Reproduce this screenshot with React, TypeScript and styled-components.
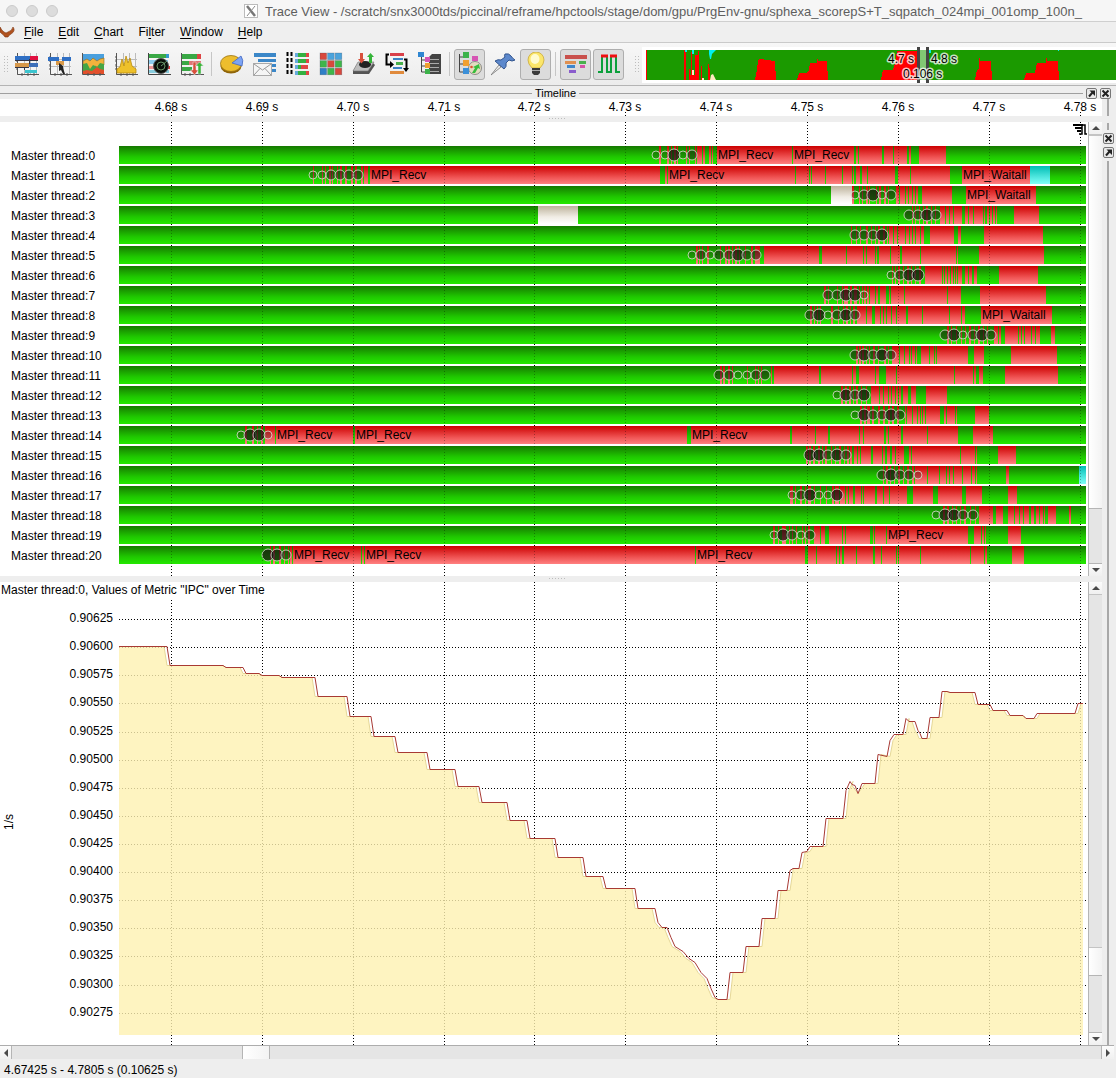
import React, { useLayoutEffect, useRef, useState } from "react";
import styled, { createGlobalStyle, css } from "styled-components";

/* ---------- shared values ---------- */

const SANS = '"Liberation Sans", Arial, Helvetica, sans-serif';
const FIRST = 119;
const LAST = 1086;
const SPAN = LAST - FIRST;

const GlobalStyle = createGlobalStyle`
  *, *::before, *::after { box-sizing: border-box; }
  body { margin: 0; background: #eeeeee; font: 12px/16px ${SANS}; color: #000; }
  button { font: inherit; color: inherit; padding: 0; margin: 0; border: 0; background: none; }
  svg { display: block; }
`;

/* ---------- trace data ---------- */

type Span = [number, number];
type Dot = [number, number];
interface Row {
  red: Span[];
  green?: Span[];
  white?: Span[];
  cyan?: Span[];
  dots: Dot[];
  labels?: [number, string][];
}

const RECV = "MPI_Recv";
const WAIT = "MPI_Waitall";

const ROWS: Row[] = [
  {
    red: [[659, 661], [667, 669], [671, 672], [674, 676], [677, 678], [686, 687], [689, 690], [695, 696], [697, 702], [703, 705], [709, 711], [712, 713], [717, 911], [919, 946]],
    green: [[792, 793], [854, 856], [858, 859], [882, 884], [893, 894], [907, 909]],
    dots: [[656, 4], [665, 4], [674, 6], [683, 4], [692, 5]],
    labels: [[718, RECV], [794, RECV]],
  },
  {
    red: [[313, 314], [322, 323], [325, 326], [329, 331], [332, 333], [337, 338], [340, 342], [345, 347], [351, 353], [355, 357], [361, 363], [364, 368], [370, 1030]],
    green: [[660, 665], [667, 668], [795, 796], [809, 810], [811, 812], [825, 826], [842, 843], [852, 853], [854, 856], [860, 862], [867, 868], [895, 898], [910, 911], [950, 962]],
    cyan: [[1030, 1050]],
    dots: [[313, 4], [322, 4], [331, 5], [340, 5], [349, 5], [358, 5]],
    labels: [[371, RECV], [669, RECV], [963, WAIT]],
  },
  {
    red: [[852, 854], [859, 860], [862, 863], [866, 868], [869, 870], [876, 877], [879, 881], [884, 886], [888, 889], [896, 899], [900, 905], [906, 908], [909, 912], [913, 915], [916, 918], [922, 952], [966, 1036]],
    white: [[831, 852]],
    dots: [[855, 4], [864, 5], [873, 6], [882, 4], [891, 5]],
    labels: [[967, WAIT]],
  },
  {
    red: [[912, 913], [915, 916], [919, 920], [923, 924], [926, 928], [931, 932], [935, 936], [940, 945], [946, 949], [950, 953], [954, 962], [965, 968], [969, 973], [974, 983], [984, 985], [987, 989], [990, 992], [993, 995], [996, 997], [1014, 1039]],
    white: [[538, 578]],
    dots: [[909, 5], [918, 5], [927, 6], [936, 5]],
  },
  {
    red: [[851, 852], [856, 857], [860, 861], [866, 868], [871, 872], [875, 876], [878, 880], [883, 885], [887, 888], [889, 893], [894, 897], [898, 905], [906, 909], [910, 912], [913, 915], [916, 920], [921, 924], [930, 954], [958, 961], [984, 1043]],
    dots: [[855, 5], [864, 5], [873, 5], [882, 6]],
  },
  {
    red: [[696, 698], [699, 700], [702, 703], [707, 709], [720, 721], [725, 727], [728, 730], [732, 733], [735, 737], [739, 740], [745, 746], [751, 753], [755, 760], [764, 958], [979, 1044]],
    green: [[819, 822], [846, 847], [863, 864], [866, 867], [875, 876], [877, 879], [890, 891], [900, 902], [920, 921], [956, 957]],
    dots: [[692, 4], [701, 5], [710, 4], [719, 5], [729, 5], [738, 6], [747, 5], [756, 5]],
  },
  {
    red: [[892, 893], [895, 896], [898, 900], [903, 904], [907, 909], [911, 912], [915, 916], [919, 921], [925, 942], [943, 944], [945, 947], [948, 950], [951, 953], [954, 955], [956, 957], [958, 962], [965, 968], [969, 972], [974, 977], [999, 1038]],
    dots: [[891, 4], [900, 5], [909, 6], [918, 6]],
  },
  {
    red: [[824, 826], [828, 829], [837, 838], [842, 843], [844, 848], [850, 852], [854, 857], [859, 860], [862, 961], [980, 1046]],
    green: [[863, 864], [866, 867], [869, 870], [875, 876], [878, 880], [886, 889], [890, 891], [904, 905], [947, 948]],
    dots: [[828, 5], [837, 5], [846, 6], [855, 6], [864, 4]],
  },
  {
    red: [[810, 812], [814, 815], [817, 818], [820, 821], [831, 833], [838, 839], [843, 844], [846, 848], [850, 851], [853, 855], [857, 965], [981, 1052]],
    green: [[866, 867], [872, 875], [880, 881], [883, 884], [886, 887], [891, 892], [896, 897], [906, 908], [922, 923], [949, 950], [961, 962]],
    dots: [[810, 5], [819, 6], [828, 4], [837, 5], [846, 6], [855, 5]],
    labels: [[982, WAIT]],
  },
  {
    red: [[947, 949], [951, 952], [956, 957], [961, 962], [965, 966], [969, 971], [974, 975], [978, 980], [983, 984], [987, 988], [994, 998], [999, 1001], [1005, 1018], [1019, 1021], [1022, 1024], [1025, 1031], [1032, 1035], [1036, 1040], [1051, 1055]],
    dots: [[945, 5], [954, 6], [963, 4], [973, 5], [982, 6], [991, 5]],
  },
  {
    red: [[856, 858], [859, 861], [862, 864], [866, 867], [869, 870], [873, 875], [878, 879], [884, 886], [888, 889], [892, 899], [900, 904], [905, 909], [910, 911], [912, 915], [916, 917], [921, 968], [974, 984], [1011, 1057]],
    green: [[929, 930], [934, 935], [936, 937]],
    dots: [[855, 5], [864, 6], [873, 5], [882, 6], [891, 5]],
  },
  {
    red: [[720, 722], [723, 725], [728, 730], [732, 733], [747, 748], [755, 756], [758, 759], [761, 762], [771, 772], [774, 973], [974, 976], [979, 983], [1005, 1058]],
    green: [[819, 821], [852, 853], [856, 859], [875, 876], [879, 886], [896, 897], [954, 955]],
    dots: [[719, 5], [729, 5], [738, 4], [747, 4], [756, 5], [765, 5]],
  },
  {
    red: [[841, 843], [845, 847], [849, 851], [853, 854], [856, 858], [861, 862], [866, 867], [871, 879], [880, 883], [884, 888], [889, 891], [892, 895], [896, 898], [899, 901], [903, 908], [911, 916], [926, 947]],
    dots: [[837, 4], [846, 6], [855, 5], [864, 6]],
  },
  {
    red: [[860, 862], [864, 866], [867, 870], [872, 874], [878, 880], [883, 885], [888, 890], [892, 894], [897, 899], [905, 906], [907, 912], [913, 917], [918, 920], [921, 922], [923, 925], [926, 940], [944, 946], [947, 955], [956, 957], [975, 989]],
    dots: [[855, 4], [864, 6], [873, 5], [882, 5], [891, 6], [900, 5]],
  },
  {
    red: [[245, 247], [252, 254], [257, 258], [261, 263], [265, 958], [973, 993]],
    green: [[275, 276], [353, 355], [687, 691], [790, 792], [815, 816], [828, 830], [859, 860], [863, 864], [884, 886], [888, 889], [901, 903], [927, 928]],
    dots: [[241, 4], [250, 6], [259, 6], [268, 4]],
    labels: [[277, RECV], [356, RECV], [692, RECV]],
  },
  {
    red: [[806, 808], [809, 811], [813, 815], [818, 820], [822, 823], [825, 827], [831, 832], [835, 836], [839, 841], [844, 845], [847, 849], [850, 977], [998, 1016]],
    green: [[852, 854], [857, 858], [860, 861], [871, 873], [882, 883], [885, 887], [890, 892], [895, 896], [904, 909], [911, 912], [960, 961], [975, 976]],
    dots: [[810, 6], [819, 6], [828, 5], [837, 6], [846, 5]],
  },
  {
    red: [[883, 884], [886, 888], [890, 891], [894, 895], [898, 900], [903, 904], [907, 909], [912, 914], [915, 977], [1006, 1009]],
    green: [[927, 928], [939, 940], [946, 947], [949, 950], [953, 954], [962, 963], [971, 972], [975, 976]],
    cyan: [[1079, 1086]],
    dots: [[882, 5], [891, 6], [900, 5], [909, 5], [918, 4]],
  },
  {
    red: [[790, 793], [795, 796], [800, 802], [805, 806], [808, 811], [814, 815], [820, 821], [826, 827], [832, 834], [835, 839], [840, 982], [1008, 1017]],
    green: [[845, 846], [848, 849], [853, 855], [861, 862], [863, 864], [875, 877], [883, 884], [889, 890], [907, 913], [933, 938], [962, 966]],
    dots: [[792, 4], [801, 5], [810, 6], [819, 4], [828, 4], [837, 6]],
  },
  {
    red: [[943, 945], [947, 949], [952, 953], [956, 957], [960, 961], [964, 966], [970, 971], [975, 976], [979, 993], [996, 1003], [1008, 1014], [1015, 1019], [1020, 1023], [1024, 1029], [1031, 1034], [1036, 1039], [1040, 1043], [1044, 1045], [1048, 1056], [1069, 1071]],
    dots: [[936, 4], [945, 6], [954, 6], [963, 5], [973, 5]],
  },
  {
    red: [[773, 775], [778, 779], [782, 786], [789, 790], [792, 793], [796, 797], [802, 803], [805, 806], [808, 810], [814, 968], [974, 981], [982, 984], [985, 986], [1008, 1021]],
    green: [[820, 821], [825, 829], [842, 843], [845, 846], [870, 873], [874, 875], [886, 887]],
    dots: [[774, 4], [783, 6], [792, 5], [801, 4], [810, 5]],
    labels: [[888, RECV]],
  },
  {
    red: [[270, 271], [273, 275], [279, 281], [284, 285], [288, 289], [290, 987], [1012, 1024]],
    green: [[292, 293], [361, 362], [364, 365], [695, 696], [805, 808], [816, 817], [836, 837], [839, 840], [842, 844], [856, 857], [873, 875], [881, 882], [896, 897], [898, 899], [920, 921], [970, 971], [984, 985]],
    dots: [[268, 6], [277, 6], [286, 5]],
    labels: [[294, RECV], [366, RECV], [697, RECV]],
  },
];

const TICKS: [number, string][] = [
  [171, "4.68 s"], [262, "4.69 s"], [353, "4.70 s"], [444, "4.71 s"], [534, "4.72 s"], [625, "4.73 s"],
  [716, "4.74 s"], [807, "4.75 s"], [898, "4.76 s"], [989, "4.77 s"], [1080, "4.78 s"],
];

const LEVELS = [37, 65, 93, 121, 150, 178, 206, 234, 262, 290, 318, 346, 374, 403, 431];
const levelName = (i: number) => (0.90625 - i * 0.00025).toFixed(5);

/* sample column, distance from the top of the metric chart */
const CURVE: [number, number][] = [
  [119, 64], [167, 64], [170, 83], [223, 83], [226, 85], [243, 85], [246, 91], [259, 91], [262, 93], [279, 93], [282, 95],
  [315, 95], [318, 114], [347, 114], [350, 134], [371, 134], [374, 154], [395, 154], [398, 170], [427, 170], [430, 187],
  [455, 187], [458, 204], [479, 204], [482, 220], [507, 220], [510, 238], [527, 238], [530, 256], [555, 256], [558, 275],
  [583, 275], [586, 294], [603, 294], [606, 306], [635, 306], [638, 326], [655, 326], [658, 340], [662, 345], [667, 345],
  [671, 355], [675, 364], [683, 369], [689, 376], [695, 380], [701, 390], [707, 396], [711, 406], [715, 415], [718, 417],
  [727, 417], [730, 390], [743, 390], [746, 364], [759, 364], [762, 336], [775, 336], [778, 308], [787, 308], [790, 288],
  [793, 286], [799, 286], [802, 270], [807, 269], [810, 264], [823, 264], [826, 236], [843, 236], [846, 208], [850, 199],
  [852, 202], [855, 203], [858, 211], [862, 201], [875, 201], [878, 172], [887, 174], [890, 158], [894, 152], [903, 152],
  [906, 136], [909, 139], [915, 139], [918, 148], [920, 151], [922, 156], [927, 156], [930, 135], [939, 135], [942, 109],
  [947, 109], [950, 110], [975, 110], [978, 122], [990, 122], [993, 128], [1007, 128], [1010, 133], [1023, 133],
  [1026, 136], [1034, 136], [1037, 131], [1075, 131], [1078, 121], [1083, 121],
];

/* lower envelope: falling edges come early, rising edges come late */
const ENVELOPE = CURVE.map(([x, y], i): [number, number] => {
  const prev = CURVE[i - 1] ?? CURVE[i];
  const next = CURVE[i + 1] ?? CURVE[i];
  const slope = next[1] - prev[1];
  if (i === 0 || i === CURVE.length - 1 || Math.abs(slope) < 5) return [x, y];
  return [slope > 0 ? x - 3 : x + 3, y];
});

/* ---------- hooks ---------- */

function useScale() {
  const ref = useRef<HTMLDivElement>(null);
  const [width, setWidth] = useState(SPAN);
  useLayoutEffect(() => {
    const node = ref.current;
    if (!node) return;
    const read = () => setWidth(node.clientWidth);
    read();
    const observer = new ResizeObserver(read);
    observer.observe(node);
    return () => observer.disconnect();
  }, []);
  const sx = (v: number) => Math.round(((v - FIRST) * width) / SPAN);
  return { ref, sx, width };
}

/* ---------- layout ---------- */

const Window = styled.div`
  display: flex;
  flex-direction: column;
  min-height: 100vh;
  overflow: hidden;
`;

const TitleBar = styled.header`
  display: flex;
  align-items: center;
  height: 22px;
  padding-left: 6px;
  background: #f6f6f6;
  border-bottom: 1px solid #cfcfcf;
  color: #5e5e5e;
  overflow: hidden;
`;

const Lights = styled.div`
  display: flex;
  flex: none;
  gap: 8px;
  margin-right: 186px;
`;

const Light = styled.button`
  width: 12px;
  height: 12px;
  border-radius: 50%;
  background: #dcdcdc;
  border: 1px solid #cbcbcb;
`;

const TitleLogo = styled.svg`
  flex: none;
`;

const TitleText = styled.h1`
  margin: 0 0 0 7px;
  padding-top: 2px;
  font: 400 13px/20px ${SANS};
  white-space: nowrap;
`;

const MenuBar = styled.nav`
  display: flex;
  align-items: center;
  height: 21px;
  background: #efefef;
  border-bottom: 1px solid #cacaca;
`;

const MenuItem = styled.button`
  margin-right: 15px;
  line-height: 18px;
  u { text-underline-offset: 2px; }
`;

const MenuLogo = styled.svg`
  margin-right: 9px;
`;

const Toolbar = styled.div`
  display: flex;
  align-items: center;
  gap: 2px;
  height: 43px;
  padding-left: 3px;
  background: linear-gradient(#f7f7f7, #ececec);
  border-bottom: 1px solid #b4b4b4;
`;

const Handle = styled.div<{ $apart?: boolean }>`
  flex: none;
  width: 6px;
  height: 18px;
  margin-left: ${(p) => (p.$apart ? 8 : 0)}px;
  background: radial-gradient(circle, #bdbdbd 1px, transparent 1px) 0 0 / 3px 3px;
`;

const ToolButton = styled.button<{ $on?: boolean }>`
  display: grid;
  place-items: center;
  flex: none;
  width: 31px;
  height: 31px;
  border-radius: 3px;
  ${(p) => p.$on && css`background: #dcdcdc; border: 1px solid #aeaeae;`}
`;

const Divider = styled.div`
  flex: none;
  width: 5px;
  height: 24px;
  background: linear-gradient(#c6c6c6, #c6c6c6) 2px 0 / 1px 100% no-repeat;
`;

const Overview = styled.div`
  flex: 1;
  min-width: 0;
  height: 36px;
  margin-top: 2px;
  padding-left: 4px;
  background: #fff;
  overflow: hidden;
`;

const DockHeader = styled.div`
  display: flex;
  align-items: center;
  gap: 3px;
  height: 13px;
  padding: 2px 5px 0 0;
  font-size: 11px;
  line-height: 11px;
`;

const Rule = styled.span<{ $lead?: boolean }>`
  flex: 1 1 ${(p) => (p.$lead ? 28 : 0)}px;
  height: 1px;
  background: #9f9f9f;
`;

const DockButton = styled.button`
  display: grid;
  place-items: center;
  width: 11px;
  height: 11px;
  border: 1px solid #777;
  border-radius: 2px;
  background: #e9e9e9;
`;

const HeaderButtons = styled.div`
  display: flex;
  gap: 3px;
`;

const Dock = styled.section`
  display: flex;
`;

const DockMain = styled.div`
  flex: 1;
  min-width: 0;
`;

const Rail = styled.aside`
  display: flex;
  flex-direction: column;
  align-items: center;
  gap: 3px;
  width: 14px;
  padding-right: 2px;
`;

const RailLine = styled.span<{ $length?: number }>`
  flex: ${(p) => (p.$length ? `0 0 ${p.$length}px` : "1")};
  width: 2px;
  background: #a8a8a8;
`;

const RailGap = styled.span`
  height: 1px;
`;

const Ruler = styled.div`
  display: flex;
  height: 17px;
  padding-right: 16px;
  background: #fff;
`;

const Panel = styled.div`
  display: flex;
  position: relative;
  background: #fff;
`;

const Labels = styled.div`
  flex: none;
  width: 119px;
`;

const ThreadLabels = styled(Labels)`
  padding: 24px 0 10px 11px;
  line-height: 20px;
`;

const Plot = styled.div`
  flex: 1;
  min-width: 0;
  margin-right: 2px;
  svg { width: 100%; overflow: visible; }
`;

const RulerPlot = styled(Plot)`
  margin-right: 0;
`;

const Splitter = styled.div`
  display: grid;
  place-items: center;
  height: 6px;
  padding-bottom: 2px;
  margin-right: -12px;
  &::after {
    content: "";
    width: 18px;
    height: 2px;
    background: radial-gradient(circle, #bdbdbd 1px, transparent 1px) 0 0 / 3px 3px;
  }
`;

const ChartTitle = styled.h2`
  position: absolute;
  top: 0;
  left: 0;
  margin: 0;
  padding: 0 1px;
  font-size: 12px;
  font-weight: 400;
  line-height: 17px;
  background: #fff;
`;

const ScrollV = styled.div`
  display: flex;
  flex-direction: column;
  flex: none;
  width: 14px;
  background: #e5e5e5;
  border-left: 1px solid #b5b5b5;
`;

const ScrollH = styled.div`
  display: flex;
  height: 14px;
  margin-right: 2px;
  background: #e5e5e5;
  border-top: 1px solid #adadad;
`;

const Arrow = styled.button<{ $side: "top" | "bottom" | "left" | "right" }>`
  display: grid;
  place-items: center;
  flex: none;
  min-width: 12px;
  height: 13px;
  background: linear-gradient(#fcfcfc, #f0f0f0);
  ${(p) => ({
    top: css`border-bottom: 1px solid #c4c4c4;`,
    bottom: css`border-top: 1px solid #b5b5b5;`,
    left: css`border-right: 1px solid #b5b5b5;`,
    right: css`border-left: 1px solid #b5b5b5; width: 13px;`,
  })[p.$side]}
`;

const Gap = styled.span<{ $grow: number }>`
  flex: ${(p) => p.$grow} 0 0;
`;

const Thumb = styled.span<{ $grow: number; $flat?: boolean }>`
  flex: ${(p) => p.$grow} 0 0;
  background: linear-gradient(90deg, #fff, #f3f3f3);
  ${(p) => (p.$flat
    ? css`border-left: 1px solid #b5b5b5; border-right: 1px solid #b5b5b5;`
    : css`border-top: 1px solid #c4c4c4; border-bottom: 1px solid #b5b5b5;`)}
`;

const StatusBar = styled.footer`
  padding: 3px 0 0 4px;
  line-height: 16px;
`;

/* ---------- drawings ---------- */

const Icon = ({ children }: { children: React.ReactNode }) => (
  <svg width="24" height="24" viewBox="0 0 24 24" aria-hidden="true">{children}</svg>
);

const Grid = () => (
  <>
    <rect x="1" y="2" width="22" height="20" fill="#f4f4f4" />
    <path d="M2.5 1v22M9.5 1v22M15.5 1v22M21.5 1v22M1 7.5h22M1 14.5h22" stroke="#bbb" />
    <path d="M2.5 1v21.5H24M1 5h2M1 9h2M1 13h2M1 17h2M7 21v3M13 21v3M19 21v3" stroke="#555" fill="none" />
  </>
);

const Bars = ({ rows }: { rows: [number, number, number, number, string][] }) => (
  <>{rows.map(([x, y, w, h, f], i) => <rect key={i} x={x} y={y} width={w} height={h} fill={f} />)}</>
);

const TimelineIcon = () => (
  <Icon><Grid />
    <Bars rows={[[0, 4, 15, 4, "#2f6fc4"], [15, 4, 8, 4, "#e01040"], [0, 11, 14, 4, "#d6974a"], [14, 11, 9, 4, "#3d6fb8"], [10, 18, 12, 3, "#3cc5cf"]]} />
    <path d="M0 8.5h23M0 15.5h14M14.5 7v5M9.5 15v3" stroke="#334" />
  </Icon>
);
const ProcessIcon = () => (
  <Icon><Grid />
    <Bars rows={[[0, 5, 11, 4, "#2f6fc4"], [14, 5, 9, 4, "#2f6fc4"], [8, 9, 8, 4, "#d99a4a"]]} />
    <path d="M11 11l4 3v2l2 6h-2l-2-4-2 1z" fill="#222" />
  </Icon>
);
const AreaIcon = () => (
  <Icon>
    <rect x="2" y="2" width="21" height="19" fill="#4aa0de" />
    <path d="M2 9l4-2 3 2 3-3 4 3 3-2 4-1v7l-5 3-4-2-5 4-7-5z" fill="#f3b23c" stroke="#8a6a20" strokeWidth=".6" />
    <path d="M2 12l4-1 3 6 3-4 4 2 3-4 4 1v9H2z" fill="#45a545" />
    <path d="M2 19l4-1 5 1 5-4 3 2 4 1v4H2z" fill="#e2502c" />
    <path d="M1.5 1v21.5H24M7 21v3M13 21v3M19 21v3" stroke="#555" fill="none" />
  </Icon>
);
const PeakIcon = () => (
  <Icon><Grid />
    <path d="M3 21v-4l3-2 2-8 2 7 2-10 2 7 2-5 2 8 4 3v4z" fill="#eec12a" stroke="#b98c10" strokeWidth=".8" />
  </Icon>
);
const RadarIcon = () => (
  <Icon>
    <Bars rows={[[1, 2, 18, 4, "#39a845"], [19, 2, 3, 4, "#39c"], [1, 8, 20, 4, "#8ccdf0"], [1, 14, 9, 3, "#e99"], [1, 18, 10, 3, "#8cd"], [20, 14, 3, 3, "#d33"], [19, 18, 3, 3, "#8cd"]]} />
    <circle cx="14" cy="14" r="7.5" fill="#0a100a" stroke="#555" />
    <path d="M14 14L20 9M10 14a4 4 0 0 1 8 0 4 4 0 0 1-8 0" stroke="#7db37d" fill="none" strokeWidth=".8" />
    <path d="M1.5 1v21.5H24" stroke="#444" fill="none" />
  </Icon>
);
const ExchangeIcon = () => (
  <Icon>
    <Bars rows={[[2, 2, 15, 5, "#39a845"], [17, 2, 4, 5, "#d44"], [2, 9, 7, 4, "#39a845"], [9, 9, 12, 4, "#d77"], [2, 15, 10, 4, "#39a845"]]} />
    <path d="M1.5 1v21.5H24M5 21v3M10 21v3" stroke="#555" fill="none" />
    <path d="M13 10h3v8h2.5L14.5 23 10.5 18H13z" fill="#d8503c" stroke="#eee" strokeWidth=".5" />
    <path d="M18 22v-8h-2.5L19.5 10l4 4H21v8z" fill="#38b53a" stroke="#eee" strokeWidth=".5" />
  </Icon>
);
const PieIcon = () => (
  <Icon>
    <ellipse cx="11" cy="14" rx="10.5" ry="7.5" fill="#8f6408" />
    <ellipse cx="11" cy="11.5" rx="10.5" ry="8" fill="#edbd2d" stroke="#9a7210" strokeWidth=".8" />
    <path d="M12 11l9-7q3 4 1 10z" fill="#7da4f4" stroke="#4468c0" strokeWidth=".8" />
  </Icon>
);
const MailIcon = () => (
  <Icon>
    <Bars rows={[[1, 1, 22, 4, "#3b87c8"], [5, 7, 18, 3, "#3b87c8"], [8, 12, 15, 3, "#3b87c8"], [14, 17, 9, 3, "#3b87c8"]]} />
    <rect x=".5" y="11.5" width="18" height="12" fill="#f5f5f5" stroke="#aaa" />
    <path d="M1 12l8.5 6L18 12M1 23l6-6.5M18 23l-6-6.5" stroke="#999" fill="none" />
  </Icon>
);
const ColumnsIcon = () => (
  <Icon>
    {[1, 7, 13, 19].map((y, i) => (
      <g key={y}>
        <path d={`M1.5 ${y - 1}v5M5.5 ${y - 1}v5`} stroke="#000" strokeWidth="2" strokeDasharray="4 1" />
        <Bars rows={[[9, y, 3, 4, "#6ad"], [12, y, i === 2 ? 4 : 10, 4, "#34b040"], [i === 2 ? 15 : 20, y, i === 2 ? 7 : 3, 4, "#e04444"]]} />
      </g>
    ))}
  </Icon>
);
const MATRIX = ["#d8483c", "#4aa3dc", "#4aa3dc", "#3fb54a", "#d8483c", "#3fb54a", "#2f7fc6", "#3fb54a", "#d8483c"];
const MatrixIcon = () => (
  <Icon>
    {MATRIX.map((c, i) => (
      <rect key={i} x={1 + (i % 3) * 7.6} y={1 + Math.floor(i / 3) * 7.6} width="6.6" height="6.6" fill={c} stroke="#345" strokeOpacity=".4" strokeWidth=".6" />
    ))}
  </Icon>
);
const DriveIcon = () => (
  <Icon>
    <path d="M6 11h15l2 2-6 9H1v-3z" fill="#555" />
    <path d="M6 10h16l-6 9H1z" fill="#bdbdbd" stroke="#777" strokeWidth=".6" />
    <ellipse cx="13" cy="12.5" rx="6" ry="3.5" fill="#222" />
    <path d="M8 1h3v6h2l-3.5 4.5L6 7h2z" fill="#d8503c" />
    <path d="M17 11V5h-2l3.5-4L22 5h-2v6z" fill="#35b53a" />
  </Icon>
);
const FlowIcon = () => (
  <Icon>
    <Bars rows={[[5, 1, 14, 3, "#d9404a"], [8, 6, 10, 2, "#3d82c4"], [11, 10, 7, 3, "#49b04d"], [8, 15, 9, 2, "#3d82c4"], [5, 19, 14, 3, "#e08a3c"]]} />
    <path d="M4 2.5H1.5v10H6M19 7.5h2.5V17" stroke="#000" strokeWidth="2" fill="none" />
    <path d="M5 9l4 3.5L5 16zM18 16h6l-3 4z" fill="#000" />
  </Icon>
);
const TreeIcon = () => (
  <Icon>
    <path d="M3.5 5v15H8M3.5 8H8M3.5 14H8" stroke="#444" fill="none" />
    <path d="M11 5l3-3h9v20H11z" fill="#444" />
    <path d="M12 7.5h9M12 11.5h9M12 15.5h9M12 19.5h9" stroke="#aaa" />
    <Bars rows={[[0, 0, 6, 5, "#2f86d2"], [7, 5, 5, 5, "#d654b4"], [7, 11, 5, 5, "#f0a030"], [7, 17, 5, 5, "#3db34a"]]} />
  </Icon>
);
const PaletteIcon = () => (
  <Icon>
    <path d="M1.5 2v18H6M1.5 5H5M1.5 12H5" stroke="#444" fill="none" />
    <circle cx="17" cy="16" r="6.5" fill="#e2dcc0" stroke="#777" strokeWidth=".8" />
    <Bars rows={[[5, 0, 6, 6, "#3db34a"], [5, 8, 6, 6, "#f0a030"], [5, 16, 6, 6, "#3b8fd8"], [14, 4, 6, 5, "#d654b4"]]} />
    <path d="M14 21l3-5-2-1 6-3 1 5-2-1-3 5z" fill="#36bd3c" />
    <circle cx="13.5" cy="15" r="1.3" fill="#e05030" />
  </Icon>
);
const PinIcon = () => (
  <Icon>
    <path d="M0 23L8 13l2 2z" fill="#eee" stroke="#777" strokeWidth=".8" />
    <path d="M14 2q4-1 6 2t4 4q-3 2-6 0l-3 3q1 4-2 6L4 9q3-2 6-1l4-3q-1-1 0-3z" fill="#5c88cc" stroke="#34568e" />
  </Icon>
);
const BulbIcon = () => (
  <Icon>
    <path d="M12 0a8 8 0 0 1 8 8q0 4-4 8H8q-4-4-4-8a8 8 0 0 1 8-8z" fill="#fbe66a" stroke="#c9a93c" strokeWidth=".8" />
    <ellipse cx="11" cy="7" rx="4.5" ry="5" fill="#fffbd0" />
    <path d="M8 16h8v5l-2 2h-4l-2-2z" fill="#3a3a3a" />
    <path d="M8 18.5h8" stroke="#aaa" />
  </Icon>
);
const StackIcon = () => (
  <Icon>
    <Bars rows={[[1, 3, 22, 4, "#c9504c"], [1, 9, 11, 3, "#e09050"], [15, 9, 7, 3, "#49b04d"], [3, 13, 8, 3, "#3f86cc"], [16, 13, 5, 3, "#d452a8"], [5, 18, 7, 3, "#8a5ccc"]]} />
  </Icon>
);
const PulseIcon = () => (
  <Icon>
    <path d="M1 20h4V4h5v16h4V4h5v16h4" stroke="#0ca03c" strokeWidth="2" fill="none" />
    <path d="M4 4h7M13 4h7" stroke="#f01010" strokeWidth="3" />
  </Icon>
);

const TOOLS: ([string, React.FC, boolean?] | null)[] = [
  ["Master Timeline", TimelineIcon], ["Process Timeline", ProcessIcon], ["Summary Timeline", AreaIcon],
  ["Counter Data Timeline", PeakIcon], ["Performance Radar", RadarIcon], ["I/O Timeline", ExchangeIcon], null,
  ["Function Summary", PieIcon], ["Message Summary", MailIcon], ["Process Summary", ColumnsIcon],
  ["Communication Matrix", MatrixIcon], ["I/O Summary", DriveIcon], ["Call Tree", FlowIcon], ["System Tree", TreeIcon], null,
  ["Function Groups", PaletteIcon, true], ["Markers", PinIcon], ["Highlight", BulbIcon, true], null,
  ["Call Stack", StackIcon, true], ["Phases", PulseIcon, true],
];

const CloseGlyph = () => (
  <svg width="9" height="9" viewBox="0 0 9 9"><path d="M1.5 1.5l6 6M7.5 1.5l-6 6" stroke="#222" strokeWidth="2" /></svg>
);
const FloatGlyph = () => (
  <svg width="9" height="9" viewBox="0 0 9 9"><path d="M2 7.5L6 3" stroke="#222" strokeWidth="2" /><path d="M2.5 1.5H8V7z" fill="#222" /></svg>
);
const ArrowGlyph = ({ turn }: { turn: number }) => (
  <svg width="8" height="8" viewBox="0 0 8 8"><path d="M0 6h8L4 2z" fill="#4a4a4a" transform={`rotate(${turn} 4 4)`} /></svg>
);

const HUMPS = [
  "109,33 111,23 112,13 114,12 129,14 130,33",
  "151,33 153,26 161,26 163,23 164,16 171,16 171,9 172,14 181,14 182,33",
  "235,33 237,23 247,23 249,16 251,4 272,4 272,33",
  "329,33 331,23 333,22 333,7 334,14 345,14 346,33",
  "378,33 380,26 389,26 391,16 400,16 400,8 401,14 412,14 413,33",
];

const OverviewStrip = () => (
  <svg width="2000" height="36" role="img" aria-label="Zoom overview">
    <rect y="3" width="2000" height="30" fill="#1b9a00" />
    <g fill="#f00" shapeRendering="crispEdges">
      <path d="M0 3h1v30H0zM38 3h2v30h-2zM43 22h1v11h-1zM45 5h1v28h-1zM44 28h5v5h-5zM49 8h3V4h1v29h-4zM55 19h1v14h-1zM62 17h1v4h1v12h-2z" />
      {HUMPS.map((p) => <polygon key={p} points={p} />)}
    </g>
    <path d="M39 3h2v2h-2zM46 3h2v4h-2zM63 3h7l-2 2-2 2-1 5h-1l-1-5zM283 3h2v3h-2zM412 3h1v1h-1z" fill="#00f0f0" />
    <path d="M46 23h2v5h-2zM64 33l1-5 2-1 3 6zM56 31h2v2h-2z" fill="#ffe8c0" />
    <rect x="272" y="0" width="10" height="36" fill="#fff" opacity=".45" />
    <path d="M272.5 0v36M281.5 0v36" stroke="#444" strokeWidth="3" />
    <g fontFamily={SANS} fontSize="12" fill="#000" stroke="#fff" strokeOpacity=".75" strokeWidth="3" paintOrder="stroke" strokeLinejoin="round">
      <text x="242" y="16">4.7 s</text>
      <text x="285" y="16">4.8 s</text>
      <text x="257" y="31">0.106 s</text>
    </g>
  </svg>
);

const GRADIENTS: [string, string, string, string][] = [
  ["green", "#167800", "#1fc800", "#24e800"],
  ["red", "#cc0000", "#ee5050", "#ff8080"],
  ["white", "#bdb39c", "#f0ece4", "#ffffff"],
  ["cyan", "#00bdb5", "#4ee6de", "#80fff8"],
];

const MARKER_FILL: Record<number, number> = { 4: 0.25, 5: 0.5, 6: 0.72 };

function ThreadPlot() {
  const { ref, sx, width } = useScale();
  const height = 34 + ROWS.length * 20;
  const spans = (list: Span[] | undefined, fill: string) =>
    (list ?? []).map(([a, b]) => (
      <rect key={fill + a} x={sx(a)} width={Math.max(1, sx(b) - sx(a))} height="18" fill={`url(#${fill})`} />
    ));
  const lines = (color: string, top: number, bottom: number) => (
    <g stroke={color} strokeDasharray="1 2" shapeRendering="crispEdges">
      {TICKS.map(([x]) => <line key={x} x1={sx(x) + 0.5} x2={sx(x) + 0.5} y1={top} y2={bottom} />)}
    </g>
  );
  return (
    <Plot ref={ref}>
      <svg height={height} role="img" aria-label="Thread activity over time">
        <defs>
          {GRADIENTS.map(([id, a, b, c]) => (
            <linearGradient key={id} id={id} x2="0" y2="1">
              <stop offset="0" stopColor={a} /><stop offset=".6" stopColor={b} /><stop offset="1" stopColor={c} />
            </linearGradient>
          ))}
        </defs>
        {lines("#000", 0, height)}
        <g shapeRendering="crispEdges">
          {ROWS.map((row, i) => (
            <g key={i} transform={`translate(0 ${24 + i * 20})`}>
              <rect width={width} height="18" fill="url(#green)" />
              {spans(row.red, "red")}
              {spans(row.green, "green")}
              {spans(row.white, "white")}
              {spans(row.cyan, "cyan")}
            </g>
          ))}
        </g>
        {ROWS.map((row, i) => (
          <g key={i} transform={`translate(0 ${24 + i * 20})`} fontFamily={SANS} fontSize="12">
            {row.dots.map(([x, r]) => (
              <circle key={x} cx={sx(x)} cy="9" r={r} fill="#181010" fillOpacity={MARKER_FILL[r]} stroke="#e0e0d4" strokeOpacity=".8" />
            ))}
            {(row.labels ?? []).map(([x, t]) => <text key={x} x={sx(x)} y="13">{t}</text>)}
          </g>
        ))}
        {lines("rgba(0,0,0,.3)", 24, height - 12)}
        <g transform={`translate(${width - 13} 2)`} stroke="#000" fill="none">
          <path d="M0 1h10M2 4h7M4 7h4" strokeWidth="2" />
          <path d="M6 10h3V1h3v9h2" strokeWidth="1.5" />
        </g>
      </svg>
    </Plot>
  );
}

function TimeRuler() {
  const { ref, sx } = useScale();
  return (
    <Ruler>
      <Labels />
      <RulerPlot ref={ref}>
        <svg height="17" role="img" aria-label="Time axis" fontFamily={SANS} fontSize="12" textAnchor="middle">
          {TICKS.map(([x, t]) => (
            <g key={x}>
              <text x={sx(x)} y="12">{t}</text>
              <path d={`M${sx(x) + 0.5} 13v4`} stroke="#000" strokeDasharray="1 2" shapeRendering="crispEdges" />
            </g>
          ))}
        </svg>
      </RulerPlot>
    </Ruler>
  );
}

function MetricPlot() {
  const { ref, sx, width } = useScale();
  const join = (pts: [number, number][]) => pts.map(([x, y]) => `${sx(x)},${y + 0.5}`).join(" ");
  return (
    <Plot ref={ref}>
      <svg height="463" role="img" aria-label="IPC over time">
        <g stroke="#000" strokeDasharray="1 2" shapeRendering="crispEdges">
          {TICKS.map(([x]) => <line key={x} x1={sx(x) + 0.5} x2={sx(x) + 0.5} y1="0" y2="463" />)}
          {LEVELS.map((y) => <line key={y} x1="0" x2={width} y1={y + 0.5} y2={y + 0.5} />)}
        </g>
        <polygon points={`0,453 ${join(ENVELOPE)} ${sx(1083)},453`} fill="#fef1b2" fillOpacity=".8" />
        <polyline points={join(ENVELOPE)} fill="none" stroke="#e6d898" />
        <polyline points={join(CURVE)} fill="none" stroke="#a83a34" />
      </svg>
    </Plot>
  );
}

const MENUS = ["File", "Edit", "Chart", "Filter", "Window", "Help"];
const MNEMONIC: Record<string, number> = { Filter: 2 };

export default function App() {
  return (
    <Window>
      <GlobalStyle />
      <TitleBar>
        <Lights>
          <Light aria-label="Close" /><Light aria-label="Minimize" /><Light aria-label="Zoom" />
        </Lights>
        <TitleLogo width="14" height="14" viewBox="0 0 14 14" aria-hidden="true">
          <rect x=".5" y=".5" width="13" height="13" fill="#fff" stroke="#bbb" />
          <path d="M3 2l8 10" stroke="#777" strokeWidth="2.5" /><path d="M11 2L3 12" stroke="#888" />
        </TitleLogo>
        <TitleText>
          Trace View - /scratch/snx3000tds/piccinal/reframe/hpctools/stage/dom/gpu/PrgEnv-gnu/sphexa_scorepS+T_sqpatch_024mpi_001omp_100n_
        </TitleText>
      </TitleBar>
      <MenuBar>
        <MenuLogo width="15" height="12" viewBox="0 0 15 12" aria-hidden="true">
          <path d="M0 1q2 4 4 5l2 1 2-1q4-1 5-5 3 4-2 7-2 1-3 3H5Q3 8 1 7L0 6z" fill="#b0521e" stroke="#7c3410" strokeWidth=".6" />
        </MenuLogo>
        {MENUS.map((name) => {
          const at = MNEMONIC[name] ?? 0;
          return <MenuItem key={name}>{name.slice(0, at)}<u>{name[at]}</u>{name.slice(at + 1)}</MenuItem>;
        })}
      </MenuBar>
      <Toolbar>
        <Handle />
        {TOOLS.map((tool, i) => {
          if (!tool) return <Divider key={i} />;
          const [name, Glyph, on] = tool;
          return <ToolButton key={i} aria-label={name} $on={on}><Glyph /></ToolButton>;
        })}
        <Handle $apart />
        <Overview><OverviewStrip /></Overview>
      </Toolbar>
      <DockHeader>
        <Rule $lead />Timeline<Rule />
        <HeaderButtons>
          <DockButton aria-label="Float timeline"><FloatGlyph /></DockButton>
          <DockButton aria-label="Close timeline"><CloseGlyph /></DockButton>
        </HeaderButtons>
      </DockHeader>
      <Dock>
        <DockMain>
          <TimeRuler />
          <Splitter />
          <Panel>
            <ThreadLabels>
              {ROWS.map((_, i) => <div key={i}>Master thread:{i}</div>)}
            </ThreadLabels>
            <ThreadPlot />
            <ScrollV>
              <Arrow $side="top" aria-label="Scroll up"><ArrowGlyph turn={0} /></Arrow>
              <Thumb $grow={374} /><Gap $grow={54} />
              <Arrow $side="bottom" aria-label="Scroll down"><ArrowGlyph turn={180} /></Arrow>
            </ScrollV>
          </Panel>
          <Splitter />
          <Panel>
            <ChartTitle>Master thread:0, Values of Metric "IPC" over Time</ChartTitle>
            <Labels>
              <svg width="119" height="463" fontFamily={SANS} fontSize="12" role="img" aria-label="IPC axis">
                {LEVELS.map((y, i) => <text key={y} x="113" y={y + 3} textAnchor="end">{levelName(i)}</text>)}
                <text transform="translate(13 240) rotate(-90)" textAnchor="middle">1/s</text>
              </svg>
            </Labels>
            <MetricPlot />
            <ScrollV>
              <Arrow $side="top" aria-label="Scroll up"><ArrowGlyph turn={0} /></Arrow>
              <Gap $grow={354} /><Thumb $grow={27} /><Gap $grow={56} />
              <Arrow $side="bottom" aria-label="Scroll down"><ArrowGlyph turn={180} /></Arrow>
            </ScrollV>
          </Panel>
        </DockMain>
        <Rail>
          <RailLine $length={17} />
          <RailGap />
          <RailLine $length={7} />
          <DockButton aria-label="Close chart"><CloseGlyph /></DockButton>
          <DockButton aria-label="Float chart"><FloatGlyph /></DockButton>
          <RailLine />
        </Rail>
      </Dock>
      <ScrollH>
        <Arrow $side="left" aria-label="Scroll left"><ArrowGlyph turn={-90} /></Arrow>
        <Gap $grow={230} /><Thumb $grow={26} $flat /><Gap $grow={833} />
        <Arrow $side="right" aria-label="Scroll right"><ArrowGlyph turn={90} /></Arrow>
      </ScrollH>
      <StatusBar>4.67425 s - 4.7805 s (0.10625 s)</StatusBar>
    </Window>
  );
}
